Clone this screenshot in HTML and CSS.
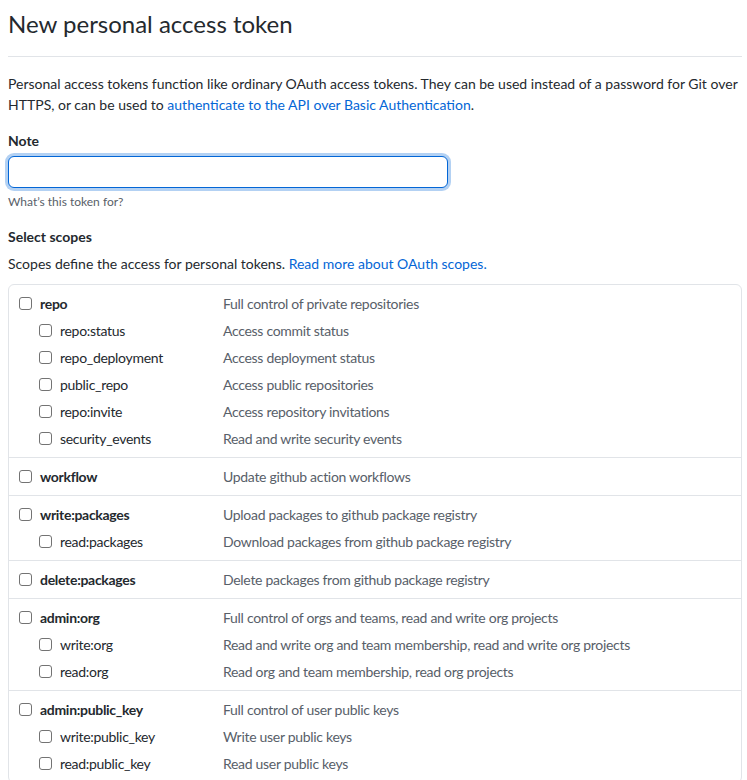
FILE: index.html
```html
<!DOCTYPE html>
<html lang="en">
<head>
<meta charset="utf-8">
<title>New personal access token</title>
<link rel="stylesheet" href="styles.css">
</head>
<body>
<div class="page">
  <h2 class="subhead">New personal access token</h2>
  <p class="intro">Personal access tokens function like ordinary OAuth access tokens. They can be used instead of a password for Git over HTTPS, or can be used to <a href="#">authenticate to the API over Basic Authentication</a>.</p>

  <div class="form-group">
    <label class="form-label" for="note">Note</label>
    <input class="form-input" id="note" type="text">
    <p class="note">What’s this token for?</p>
  </div>

  <div class="form-group scopes-head">
    <div class="form-label">Select scopes</div>
    <p class="scopes-desc">Scopes define the access for personal tokens. <a href="#">Read more about OAuth scopes.</a></p>
  </div>

  <div class="scopes">
    <div class="group">
      <div class="row top"><label class="name"><span class="cb"></span>repo</label><span class="desc">Full control of private repositories</span></div>
      <div class="row sub"><label class="name"><span class="cb"></span>repo:status</label><span class="desc">Access commit status</span></div>
      <div class="row sub"><label class="name"><span class="cb"></span>repo_deployment</label><span class="desc">Access deployment status</span></div>
      <div class="row sub"><label class="name"><span class="cb"></span>public_repo</label><span class="desc">Access public repositories</span></div>
      <div class="row sub"><label class="name"><span class="cb"></span>repo:invite</label><span class="desc">Access repository invitations</span></div>
      <div class="row sub"><label class="name"><span class="cb"></span>security_events</label><span class="desc">Read and write security events</span></div>
    </div>
    <div class="group">
      <div class="row top"><label class="name"><span class="cb"></span>workflow</label><span class="desc">Update github action workflows</span></div>
    </div>
    <div class="group">
      <div class="row top"><label class="name"><span class="cb"></span>write:packages</label><span class="desc">Upload packages to github package registry</span></div>
      <div class="row sub"><label class="name"><span class="cb"></span>read:packages</label><span class="desc">Download packages from github package registry</span></div>
    </div>
    <div class="group">
      <div class="row top"><label class="name"><span class="cb"></span>delete:packages</label><span class="desc">Delete packages from github package registry</span></div>
    </div>
    <div class="group">
      <div class="row top"><label class="name"><span class="cb"></span>admin:org</label><span class="desc">Full control of orgs and teams, read and write org projects</span></div>
      <div class="row sub"><label class="name"><span class="cb"></span>write:org</label><span class="desc">Read and write org and team membership, read and write org projects</span></div>
      <div class="row sub"><label class="name"><span class="cb"></span>read:org</label><span class="desc">Read org and team membership, read org projects</span></div>
    </div>
    <div class="group">
      <div class="row top"><label class="name"><span class="cb"></span>admin:public_key</label><span class="desc">Full control of user public keys</span></div>
      <div class="row sub"><label class="name"><span class="cb"></span>write:public_key</label><span class="desc">Write user public keys</span></div>
      <div class="row sub"><label class="name"><span class="cb"></span>read:public_key</label><span class="desc">Read user public keys</span></div>
    </div>
  </div>
</div>
</body>
</html>
```
FILE: styles.css
```css
* { box-sizing: border-box; }
html, body { margin: 0; padding: 0; background: #fff; }
body {
  font-family: Lato, "Open Sans", "Liberation Sans", sans-serif;
  font-size: 14px;
  line-height: 21px;
  color: #24292e;
}
.page {
  padding: 6px 5px 0 8px;
}
a { color: #0366d6; text-decoration: none; }
.subhead {
  margin: 0;
  font-size: 24px;
  font-weight: 400;
  line-height: 36px;
  padding-bottom: 14px;
  border-bottom: 1px solid #e1e4e8;
}
.intro {
  margin: 16px 0 0;
}
.form-group { margin-top: 15px; }
.form-label {
  display: block;
  font-weight: 700;
  margin-bottom: 5px;
}
.form-input {
  display: block;
  width: 440px;
  height: 32px;
  margin: 0;
  border: 1px solid #0366d6;
  border-radius: 6px;
  box-shadow: 0 0 0 3px rgba(3, 102, 214, 0.3);
  outline: none;
  background: #fff;
  font: inherit;
  padding: 5px 12px;
}
.note {
  margin: 5px 0 0;
  font-size: 12px;
  line-height: 18px;
  color: #586069;
}
.scopes-head .form-label { margin-bottom: 6px; }
.scopes-desc { margin: 0; }
.scopes {
  margin-top: 10px;
  border: 1px solid #e1e4e8;
  border-radius: 6px;
}
.group {
  padding: 5px 0;
}
.group + .group { border-top: 1px solid #e1e4e8; }
.row {
  display: grid;
  grid-template-columns: 214px 1fr;
  align-items: center;
  height: 27px;
  letter-spacing: -0.3px;
}
.name {
  display: flex;
  align-items: center;
  gap: 8px;
  padding-left: 10px;
}
.row.top .name { font-weight: 700; }
.row.sub .name { padding-left: 30px; }
.cb {
  width: 13px;
  height: 13px;
  border: 1px solid #737373;
  border-radius: 3px;
  background: #fff;
  flex: none;
}
.desc { color: #586069; }
```
